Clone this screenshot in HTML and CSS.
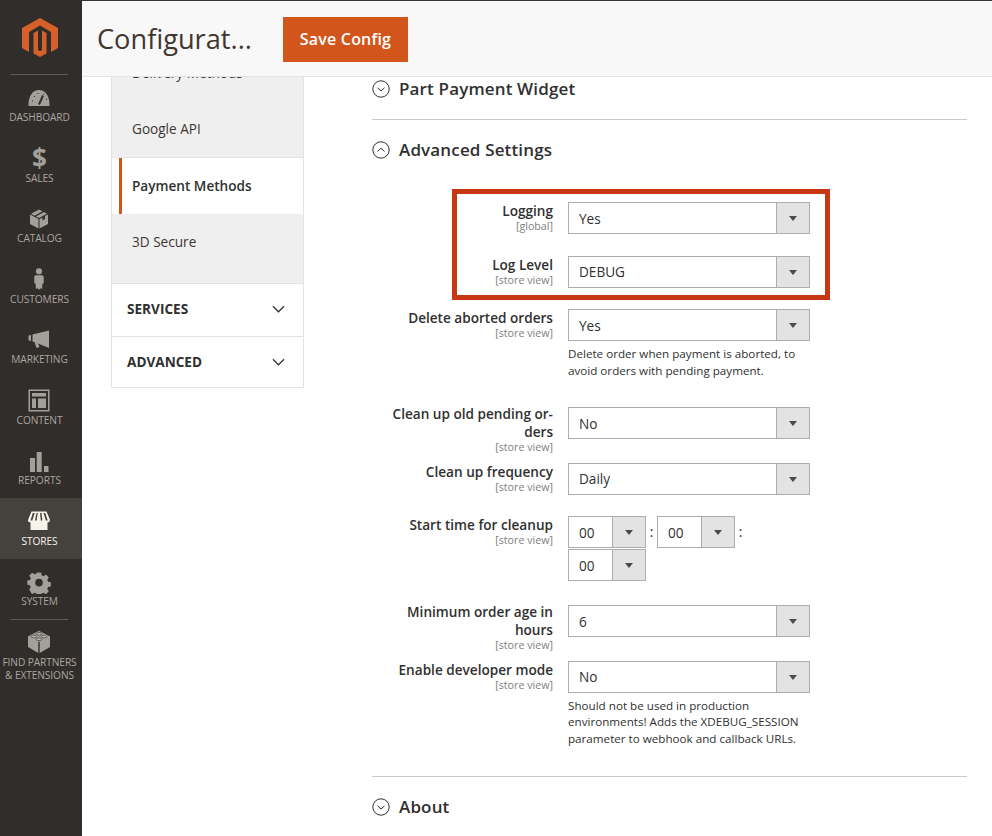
FILE: index.html
```html
<!DOCTYPE html>
<html lang="en">
<head>
<meta charset="utf-8">
<title>Configuration</title>
<link rel="stylesheet" href="styles.css">
</head>
<body>
<div class="app">
  <nav class="side">
    <div class="logo">
      <svg width="36" height="39" viewBox="0 0 36 39"><path fill="#d6602a" d="M18 0 36 10V30L29 34V14L18 7.500 7 14V34L0 30V10Z"/><path fill="#d6602a" d="M18 39 11.500 35.500V15L16 12.500V32L18 33.200 20 32V12.500L24.500 15V35.500Z"/></svg>
    </div>
    <a class="item"><svg class="ico" viewBox="0 0 24 24"><path class="f" d="M1.500 20v-2C1.500 10 6 4 12 4s10.500 6 10.500 14v2Z"/><path class="k" d="M12 18.500 16 9.500" stroke-width="2"/><path class="k" d="M5 15h1M7 10l1 1M11 7v1M17 7.500l-.5 1M20 13l-1 .5" stroke-width="1"/></svg><span>Dashboard</span></a>
    <a class="item"><span class="dollar">$</span><span>Sales</span></a>
    <a class="item"><svg class="ico" viewBox="0 0 24 24"><path class="f" d="M3 7.500 11.500 12v9.500L3 17ZM21 7.500V17l-8.500 4.500V12l3-1.600v3l2.500-1.300v-3ZM12 2.500l3.500 1.800L7.500 8.700 4 6.800ZM17 5.100 20 6.800 12 11 9 9.400Z"/></svg><span>Catalog</span></a>
    <a class="item"><svg class="ico tall" viewBox="0 0 24 28"><circle class="f" cx="12" cy="5" r="3.600"/><path class="f" d="M8 9.500h8l1.500 1.500V19l-1.500.5-.5 6.500-1.500-1.500-1.500 2-.5-1.500-.5 1.500-1.500-2L8.500 26 8 19.500 6.500 19V11Z"/></svg><span>Customers</span></a>
    <a class="item"><svg class="ico" viewBox="0 0 24 24"><path class="f" d="M1.500 7.500 4 7v6l-2.500-.5ZM5.500 6.500 22 2.500v17.500L11 15.500l1.500 3.500-3 1-2-6-2-.5Z"/></svg><span>Marketing</span></a>
    <a class="item"><svg class="ico" viewBox="0 0 24 24"><path class="f" fill-rule="evenodd" d="M1.500 1.500h21v22h-21ZM3 3v19h18V3ZM5 5h14v3.500H5ZM5 10.500h4v9.500H5ZM11 10.500h8v9.500h-8Z"/></svg><span>Content</span></a>
    <a class="item"><svg class="ico" viewBox="0 0 24 24"><path class="f" d="M3 9h5v14H3ZM9.700 3h5v20h-5ZM17 17h4.500v6H17Z"/></svg><span>Reports</span></a>
    <a class="item on"><svg class="ico" viewBox="0 0 24 24"><path class="f" fill-rule="evenodd" d="M4.500 2.500h15L23 11c0 1.500-1 2.500-2.500 2.500V21h-17v-7.500C2 13.500.500 12.500 1 11ZM5.800 4 3.500 11.500h1.800L7.700 4ZM9.500 4l-1.500 7.500h1.600L10.800 4ZM13 4l.8 7.500h1.600L14.500 4ZM16.500 4l2.400 7.500h1.800L18.300 4Z"/></svg><span>Stores</span></a>
    <a class="item"><svg class="ico" viewBox="0 0 24 24"><path class="f" fill-rule="evenodd" d="M9.700 1.500h4.600l.6 3 2.200 1 2.600-1.700 3.200 3.200-1.700 2.600.9 2.200 3 .6v4.600l-3 .6-.9 2.200 1.700 2.600-3.200 3.200-2.600-1.700-2.200.9-.6 3H9.700l-.6-3-2.200-.9-2.600 1.700L1.100 20.400 2.800 17.800 1.900 15.600-1 15V10.400l3-.6.900-2.200L1.100 5 4.300 1.800 6.900 3.500l2.200-1ZM12 8.500a4.200 4.200 0 1 0 0 8.400 4.200 4.200 0 0 0 0-8.400Z" transform="translate(1.200 1.200) scale(.9)"/></svg><span>System</span></a>
    <a class="item last"><svg class="ico" viewBox="0 0 24 24"><path class="f" d="M12 1 23 6.500V17L12.700 23V11.500ZM12 1 1 6.500V17l10.300 6V11.500Z"/><path class="f" d="M1 6.500 12 12 23 6.500 12 1Z"/><g class="studs"><ellipse cx="12" cy="3.800" rx="2.800" ry="1.400"/><ellipse cx="6.800" cy="6.500" rx="2.800" ry="1.400"/><ellipse cx="17.200" cy="6.500" rx="2.800" ry="1.400"/><ellipse cx="12" cy="9.200" rx="2.800" ry="1.400"/></g></svg><span>Find Partners<br>&amp; Extensions</span></a>
  </nav>

  <main class="main">
    <header class="top">
      <h1 class="title">Configurat...</h1>
      <button class="save" type="button">Save Config</button>
    </header>

    <div class="columns">
      <aside class="tabs">
        <ul class="sub">
          <li class="sub-item">Delivery Methods</li>
          <li class="sub-item lined">Google API</li>
          <li class="sub-item active">Payment Methods</li>
          <li class="sub-item extra lined">3D Secure</li>
        </ul>
        <div class="group"><span>SERVICES</span><svg class="chev" viewBox="0 0 14 8"><path d="M1 1l6 6 6-6"/></svg></div>
        <div class="group"><span>ADVANCED</span><svg class="chev" viewBox="0 0 14 8"><path d="M1 1l6 6 6-6"/></svg></div>
      </aside>

      <section class="panel">
        <h2 class="head first"><svg class="circ" viewBox="0 0 18 18"><circle cx="9" cy="9" r="8.200"/><path d="M5.500 7.800 9 11l3.500-3.200"/></svg>Part Payment Widget</h2>
        <h2 class="head open"><svg class="circ" viewBox="0 0 18 18"><circle cx="9" cy="9" r="8.200"/><path d="M5.500 10.500 9 7.200l3.500 3.300"/></svg>Advanced Settings</h2>

        <div class="form">
          <div class="mark"></div>

          <div class="row">
            <div class="lab"><label>Logging</label><small>[global]</small></div>
            <div class="ctl"><div class="sel"><select><option>Yes</option></select><i></i></div></div>
          </div>
          <div class="row">
            <div class="lab"><label>Log Level</label><small>[store view]</small></div>
            <div class="ctl"><div class="sel"><select><option>DEBUG</option></select><i></i></div></div>
          </div>
          <div class="row">
            <div class="lab"><label>Delete aborted orders</label><small>[store view]</small></div>
            <div class="ctl"><div class="sel"><select><option>Yes</option></select><i></i></div>
              <p class="note">Delete order when payment is aborted, to avoid orders with pending payment.</p></div>
          </div>
          <div class="row">
            <div class="lab up"><label>Clean up old pending or-<br>ders</label><small>[store view]</small></div>
            <div class="ctl"><div class="sel"><select><option>No</option></select><i></i></div></div>
          </div>
          <div class="row">
            <div class="lab"><label>Clean up frequency</label><small>[store view]</small></div>
            <div class="ctl"><div class="sel"><select><option>Daily</option></select><i></i></div></div>
          </div>
          <div class="row">
            <div class="lab"><label>Start time for cleanup</label><small>[store view]</small></div>
            <div class="ctl time">
              <div class="sel small"><select><option>00</option></select><i></i></div><span class="colon">:</span>
              <div class="sel small"><select><option>00</option></select><i></i></div><span class="colon">:</span>
              <div class="sel small"><select><option>00</option></select><i></i></div>
            </div>
          </div>
          <div class="row">
            <div class="lab up"><label>Minimum order age in<br>hours</label><small>[store view]</small></div>
            <div class="ctl"><div class="sel"><select><option>6</option></select><i></i></div></div>
          </div>
          <div class="row">
            <div class="lab"><label>Enable developer mode</label><small>[store view]</small></div>
            <div class="ctl"><div class="sel"><select><option>No</option></select><i></i></div>
              <p class="note">Should not be used in production environments! Adds the XDEBUG_SESSION parameter to webhook and callback URLs.</p></div>
          </div>
        </div>

        <h2 class="head about"><svg class="circ" viewBox="0 0 18 18"><circle cx="9" cy="9" r="8.200"/><path d="M5.500 7.800 9 11l3.500-3.200"/></svg>About</h2>
      </section>
    </div>
  </main>
</div>
</body>
</html>
```
FILE: styles.css
```css
* { box-sizing: border-box; }
html, body { margin: 0; padding: 0; height: 100%; overflow: hidden; }
body { font-family: "Open Sans", "Liberation Sans", sans-serif; color: #303030; background: #fff; }

.app { display: flex; height: 836px; }

.side { width: 82px; flex: none; background: #312d2a; display: flex; flex-direction: column; }
.logo { height: 74.500px; display: flex; justify-content: center; padding: 18px 3px 0 0; position: relative; }
.logo svg { display: block; width: 36px; height: 39px; }
.logo::after { content: ""; position: absolute; left: 10px; right: 14px; bottom: 0; height: 1px; background: #5f5b57; }

.item { height: 60.500px; display: flex; flex-direction: column; align-items: center; padding: 11px 3px 0 0; color: #aaa6a0; font-size: 10.200px; line-height: 13px; text-transform: uppercase; text-align: center; letter-spacing: -.1px; }
.item span:last-child { margin-top: 1.500px; white-space: nowrap; }
.item.on { background: #45423e; color: #f7f3eb; }
.item.last { position: relative; }
.item.last::before { content: ""; position: absolute; left: 10px; right: 14px; top: 0; height: 1px; background: #5f5b57; }
.ico { display: block; width: 24px; height: 24px; flex: none; margin-right: 2px; }
.ico.tall { height: 24px; }
.ico .f { fill: #a3a09a; }
.ico .k { fill: none; stroke: #312d2a; }
.ico .studs { fill: #b5b2ac; stroke: #312d2a; stroke-width: .6; }
.item.on .ico .f { fill: #f7f3eb; }
.dollar { display: block; height: 24px; font-size: 26px; line-height: 24px; font-weight: 700; color: #a3a09a; }

.main { flex: 1; position: relative; overflow: hidden; }
.top { position: absolute; z-index: 2; left: 0; right: 0; top: 0; height: 77px; background: #f8f8f8; border-top: 1px solid #373330; border-bottom: 1px solid #e3e3e3; display: flex; align-items: flex-start; padding: 16px 0 0 15px; }
.title { margin: 0; font-size: 27.200px; line-height: 44px; font-weight: 400; color: #41362f; width: 186px; white-space: nowrap; }
.save { width: 125px; height: 45px; border: 0; padding: 0; background: #d2561c; color: #fff; font: 600 16px/45px "Open Sans", sans-serif; letter-spacing: .2px; }

.columns { display: flex; padding: 45px 25px 0 29px; gap: 68px; }

.tabs { width: 193px; flex: none; border-left: 1px solid #e3e3e3; border-right: 1px solid #e3e3e3; align-self: flex-start; }
.sub { list-style: none; margin: 0; padding: 0; }
.sub-item { height: 56.300px; padding: 0 0 0 20px; background: #efefef; font-size: 13.600px; line-height: 56px; color: #41362f; }
.sub-item.lined { border-bottom: 1px solid #e3e3e3; }
.sub-item.active { margin-left: 7px; padding-left: 10px; background: #fff; border-left: 3px solid #d2561c; font-weight: 600; color: #303030; }
.sub-item.extra { height: 70px; }
.group { height: 53px; display: flex; align-items: center; justify-content: space-between; padding: 0 18px 2px 15px; border-bottom: 1px solid #e3e3e3; font-size: 13.600px; font-weight: 700; color: #303030; }
.group:last-child { height: 51px; padding-bottom: 0; }
.chev { width: 13px; height: 8px; fill: none; stroke: #303030; stroke-width: 1.300; }

.panel { width: 595px; flex: none; padding-top: 32px; }
.head { margin: 0; display: flex; align-items: center; gap: 9px; font-size: 17px; line-height: 24px; font-weight: 600; color: #303030; letter-spacing: .15px; }
.head.first { padding-bottom: 18px; border-bottom: 1px solid #c8c8c8; }
.head.open { margin-top: 18px; }
.head.about { margin-top: 0; padding-top: 18px; border-top: 1px solid #c8c8c8; }
.circ { width: 18px; height: 18px; fill: none; stroke: #303030; stroke-width: 1; flex: none; }

.form { position: relative; margin-top: 40px; padding-bottom: .5px; }
.mark { position: absolute; left: 80px; top: -13px; width: 378px; height: 111px; border: 5px solid #c83714; pointer-events: none; }

.row { display: flex; gap: 15px; align-items: flex-start; }
.lab { width: 181px; flex: none; text-align: right; padding-bottom: 4px; }
.lab label { display: block; font-size: 13.600px; line-height: 18px; font-weight: 600; color: #303030; }
.lab small { display: block; font-size: 10.700px; line-height: 13.500px; color: #808080; }
.lab.up { margin-top: -2px; padding-bottom: 8px; }
.ctl { width: 242px; flex: none; padding-bottom: 21.500px; }
.ctl.time { display: flex; flex-wrap: wrap; row-gap: 1px; padding-bottom: 24px; }
.sel { position: relative; height: 32px; }
.sel.small { width: 78px; }
.sel select { appearance: none; -webkit-appearance: none; display: block; width: 100%; height: 100%; margin: 0; padding: 0 33px 0 10px; border: 1px solid #adadad; border-radius: 0; background: #fff; font: 400 13.600px "Open Sans", sans-serif; color: #303030; }
.sel i { position: absolute; top: 0; right: 0; bottom: 0; width: 34px; background: #e3e3e3; border: 1px solid #adadad; pointer-events: none; }
.sel i::after { content: ""; position: absolute; left: 12px; top: 13px; border-style: solid; border-width: 5px 4px 0; border-color: #514943 transparent transparent; }
.colon { width: 11px; text-align: center; font-size: 13.600px; line-height: 32px; }
.note { margin: 5px 0 6.500px; font-size: 11.650px; line-height: 16.500px; color: #303030; }
```
